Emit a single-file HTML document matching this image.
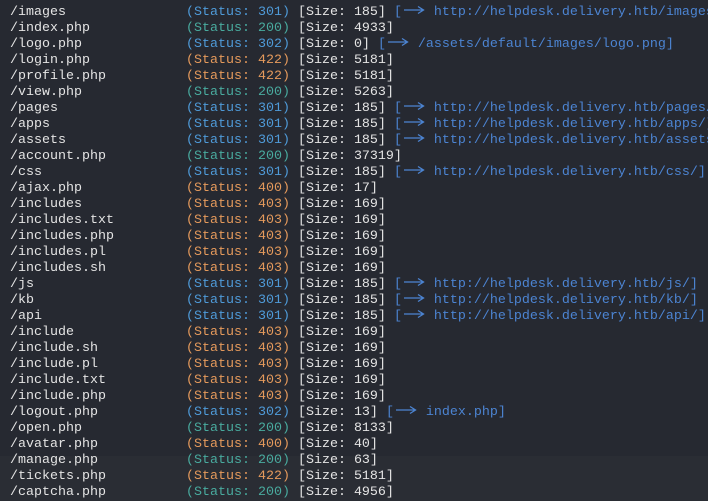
<!DOCTYPE html>
<html><head><meta charset="utf-8"><style>
html,body{margin:0;padding:0;background:#262931;width:708px;height:501px;overflow:hidden}
pre{margin:0;position:absolute;left:10px;top:5px;font-family:"Liberation Mono","DejaVu Sans Mono",monospace;font-size:13.33px;line-height:16px;color:#e4e4e4;white-space:pre}
.b{color:#4f9bd9}.g{color:#49ab9f}.o{color:#e59a5c}.l{color:#4c84d2}
.a{display:inline-block;width:24px;height:10px;vertical-align:0px}
.band{position:absolute;left:0;top:456px;width:708px;height:45px;background:#2a2d34}
</style></head><body>
<div class="band"></div>
<svg width="0" height="0" style="position:absolute"><defs><symbol id="ar" viewBox="0 0 24 10"><path d="M2 5H21M16 1.5L21.5 5L16 8.5" fill="none" stroke="#4c84d2" stroke-width="1.3"/></symbol></defs></svg>
<pre>/images               <span class="b">(Status: 301)</span> [Size: 185] <span class="l">[<svg class="a"><use href="#ar"/></svg> http://helpdesk.delivery.htb/images/]</span>
/index.php            <span class="g">(Status: 200)</span> [Size: 4933]
/logo.php             <span class="b">(Status: 302)</span> [Size: 0] <span class="l">[<svg class="a"><use href="#ar"/></svg> /assets/default/images/logo.png]</span>
/login.php            <span class="o">(Status: 422)</span> [Size: 5181]
/profile.php          <span class="o">(Status: 422)</span> [Size: 5181]
/view.php             <span class="g">(Status: 200)</span> [Size: 5263]
/pages                <span class="b">(Status: 301)</span> [Size: 185] <span class="l">[<svg class="a"><use href="#ar"/></svg> http://helpdesk.delivery.htb/pages/]</span>
/apps                 <span class="b">(Status: 301)</span> [Size: 185] <span class="l">[<svg class="a"><use href="#ar"/></svg> http://helpdesk.delivery.htb/apps/]</span>
/assets               <span class="b">(Status: 301)</span> [Size: 185] <span class="l">[<svg class="a"><use href="#ar"/></svg> http://helpdesk.delivery.htb/assets/]</span>
/account.php          <span class="g">(Status: 200)</span> [Size: 37319]
/css                  <span class="b">(Status: 301)</span> [Size: 185] <span class="l">[<svg class="a"><use href="#ar"/></svg> http://helpdesk.delivery.htb/css/]</span>
/ajax.php             <span class="o">(Status: 400)</span> [Size: 17]
/includes             <span class="o">(Status: 403)</span> [Size: 169]
/includes.txt         <span class="o">(Status: 403)</span> [Size: 169]
/includes.php         <span class="o">(Status: 403)</span> [Size: 169]
/includes.pl          <span class="o">(Status: 403)</span> [Size: 169]
/includes.sh          <span class="o">(Status: 403)</span> [Size: 169]
/js                   <span class="b">(Status: 301)</span> [Size: 185] <span class="l">[<svg class="a"><use href="#ar"/></svg> http://helpdesk.delivery.htb/js/]</span>
/kb                   <span class="b">(Status: 301)</span> [Size: 185] <span class="l">[<svg class="a"><use href="#ar"/></svg> http://helpdesk.delivery.htb/kb/]</span>
/api                  <span class="b">(Status: 301)</span> [Size: 185] <span class="l">[<svg class="a"><use href="#ar"/></svg> http://helpdesk.delivery.htb/api/]</span>
/include              <span class="o">(Status: 403)</span> [Size: 169]
/include.sh           <span class="o">(Status: 403)</span> [Size: 169]
/include.pl           <span class="o">(Status: 403)</span> [Size: 169]
/include.txt          <span class="o">(Status: 403)</span> [Size: 169]
/include.php          <span class="o">(Status: 403)</span> [Size: 169]
/logout.php           <span class="b">(Status: 302)</span> [Size: 13] <span class="l">[<svg class="a"><use href="#ar"/></svg> index.php]</span>
/open.php             <span class="g">(Status: 200)</span> [Size: 8133]
/avatar.php           <span class="o">(Status: 400)</span> [Size: 40]
/manage.php           <span class="g">(Status: 200)</span> [Size: 63]
/tickets.php          <span class="o">(Status: 422)</span> [Size: 5181]
/captcha.php          <span class="g">(Status: 200)</span> [Size: 4956]</pre>
</body></html>
